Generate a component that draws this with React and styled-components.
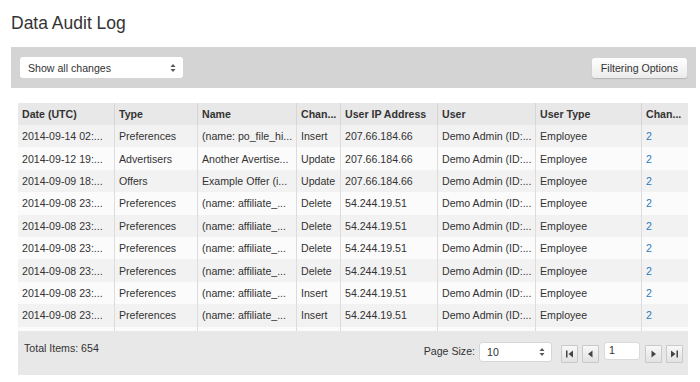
import React from 'react';
import styled, { createGlobalStyle } from 'styled-components';

const GlobalStyle = createGlobalStyle`
  html, body {
    margin: 0;
    padding: 0;
    background: #ffffff;
  }
  body {
    font-family: "Liberation Sans", Arial, Helvetica, sans-serif;
    color: #333333;
  }
`;

const Page = styled.div`
  width: 700px;
  height: 382px;
  padding: 0 4px 0 11px;
  box-sizing: border-box;
  overflow: hidden;
`;

const Title = styled.h1`
  margin: 0;
  padding-top: 12px;
  height: 47px;
  box-sizing: border-box;
  font-size: 17.5px;
  font-weight: normal;
  line-height: 22px;
  color: #333;
`;

const FilterBar = styled.div`
  display: flex;
  align-items: center;
  justify-content: space-between;
  height: 41px;
  padding: 0 9px;
  background: #d4d4d4;
`;

const SelectBox = styled.div`
  display: flex;
  align-items: center;
  justify-content: space-between;
  width: ${p => p.$width}px;
  height: ${p => p.$height}px;
  padding: 0 6px 0 7px;
  box-sizing: border-box;
  background: #ffffff;
  border-radius: 3px;
  border: 1px solid ${p => (p.$bordered ? '#d6d6d6' : 'transparent')};
  font-size: 10.6px;
  color: #333;
`;

const Button = styled.div`
  display: flex;
  align-items: center;
  height: 20px;
  padding: 0 9px;
  border-radius: 3px;
  background: linear-gradient(#ffffff, #ececec);
  box-shadow: 0 1px 1px rgba(0, 0, 0, 0.15);
  font-size: 10.6px;
  color: #333;
`;

const Table = styled.div`
  margin: 15px 8px 0 7px;
`;

const COLS = '96px 83px 99px 44px 97px 98px 106px 47px';

const HeadRow = styled.div`
  display: grid;
  grid-template-columns: ${COLS};
  height: 22px;
  background: #e8e8e8;
`;

const Body = styled.div`
  height: 206px;
  overflow: hidden;
`;

const Row = styled.div`
  display: grid;
  grid-template-columns: ${COLS};
  height: 22.4px;
  background: ${p => (p.$odd ? '#f2f2f2' : '#fbfbfb')};
`;

const Cell = styled.div`
  display: flex;
  align-items: center;
  padding: 0 4px;
  overflow: hidden;
  white-space: nowrap;
  font-size: 10.6px;
  font-weight: ${p => (p.$head ? 'bold' : 'normal')};
  color: ${p => (p.$link ? '#2b7bbd' : '#333')};
  border-left: 1px solid ${p => (p.$head ? '#d6d6d6' : '#dcdcdc')};
  &:first-child {
    border-left: none;
  }
`;

const Footer = styled.div`
  display: flex;
  justify-content: space-between;
  height: 44px;
  padding: 0 5px 0 6px;
  background: #e8e8e8;
  font-size: 10.6px;
`;

const Total = styled.div`
  padding-top: 11px;
`;

const Pager = styled.div`
  display: flex;
  align-items: flex-start;
  padding-top: 11px;
  gap: 4px;
`;

const PagerLabel = styled.span`
  margin-top: 3px;
  font-size: 10.6px;
`;

const NavButton = styled.div`
  display: flex;
  align-items: center;
  justify-content: center;
  width: 17px;
  height: 18px;
  box-sizing: border-box;
  margin-top: 3px;
  margin-left: ${p => p.$gap || 0}px;
  border: 1px solid #c9c9c9;
  background: linear-gradient(#f8f8f8, #e2e2e2);
  border-radius: 1px;
`;

const PageInput = styled.div`
  width: 36px;
  height: 18px;
  box-sizing: border-box;
  margin: 0 1px;
  padding: 0 4px;
  background: #fff;
  border: 1px solid #dadada;
  border-radius: 3px;
  font-size: 10.6px;
  line-height: 14px;
`;

const Arrows = () => (
  <svg width="6" height="10" viewBox="0 0 6 10">
    <path d="M3 1 L5.5 4 H0.5 Z" fill="#555" />
    <path d="M3 9 L5.5 6 H0.5 Z" fill="#555" />
  </svg>
);

const Tri = ({ dir, bar }) => (
  <svg width="9" height="8" viewBox="0 0 9 8">
    {dir === 'left' ? (
      <path d={bar ? 'M8 0.5 V7.5 L3.5 4 Z' : 'M6.5 0.5 V7.5 L2 4 Z'} fill="#444" />
    ) : (
      <path d={bar ? 'M1 0.5 V7.5 L5.5 4 Z' : 'M2.5 0.5 V7.5 L7 4 Z'} fill="#444" />
    )}
    {bar && <rect x={dir === 'left' ? 1 : 6.5} y="0.5" width="1.5" height="7" fill="#444" />}
  </svg>
);

const headers = ['Date (UTC)', 'Type', 'Name', 'Chan...', 'User IP Address', 'User', 'User Type', 'Chan...'];

const rows = [
  ['2014-09-14 02:...', 'Preferences', '(name: po_file_hi...', 'Insert', '207.66.184.66'],
  ['2014-09-12 19:...', 'Advertisers', 'Another Avertise...', 'Update', '207.66.184.66'],
  ['2014-09-09 18:...', 'Offers', 'Example Offer (i...', 'Update', '207.66.184.66'],
  ['2014-09-08 23:...', 'Preferences', '(name: affiliate_...', 'Delete', '54.244.19.51'],
  ['2014-09-08 23:...', 'Preferences', '(name: affiliate_...', 'Delete', '54.244.19.51'],
  ['2014-09-08 23:...', 'Preferences', '(name: affiliate_...', 'Delete', '54.244.19.51'],
  ['2014-09-08 23:...', 'Preferences', '(name: affiliate_...', 'Delete', '54.244.19.51'],
  ['2014-09-08 23:...', 'Preferences', '(name: affiliate_...', 'Insert', '54.244.19.51'],
  ['2014-09-08 23:...', 'Preferences', '(name: affiliate_...', 'Insert', '54.244.19.51'],
];

export default function App() {
  return (
    <Page>
      <GlobalStyle />
      <Title>Data Audit Log</Title>
      <FilterBar>
        <SelectBox $width={163} $height={21}>
          <span>Show all changes</span>
          <Arrows />
        </SelectBox>
        <Button>Filtering Options</Button>
      </FilterBar>

      <Table>
        <HeadRow>
          {headers.map((h, i) => (
            <Cell key={i} $head>{h}</Cell>
          ))}
        </HeadRow>
        <Body>
          {rows.map((r, i) => (
            <Row key={i} $odd={i % 2 === 0}>
              {r.map((c, j) => (
                <Cell key={j}>{c}</Cell>
              ))}
              <Cell>Demo Admin (ID:...</Cell>
              <Cell>Employee</Cell>
              <Cell $link>2</Cell>
            </Row>
          ))}
          <Row>
            {headers.map((h, i) => (
              <Cell key={i} />
            ))}
          </Row>
        </Body>
        <Footer>
          <Total>Total Items: 654</Total>
          <Pager>
            <PagerLabel>Page Size:</PagerLabel>
            <SelectBox $width={73} $height={20} $bordered>
              <span>10</span>
              <Arrows />
            </SelectBox>
            <NavButton $gap={5}><Tri dir="left" bar /></NavButton>
            <NavButton><Tri dir="left" /></NavButton>
            <PageInput>1</PageInput>
            <NavButton><Tri dir="right" /></NavButton>
            <NavButton><Tri dir="right" bar /></NavButton>
          </Pager>
        </Footer>
      </Table>
    </Page>
  );
}
